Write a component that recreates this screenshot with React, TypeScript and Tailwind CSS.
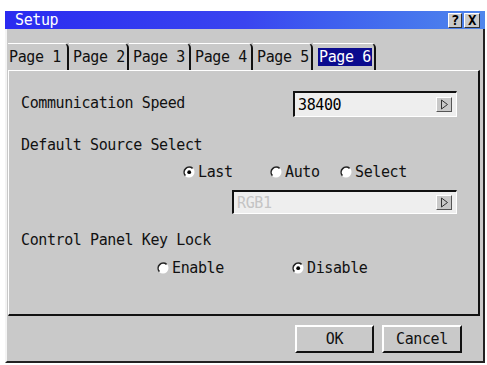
import React from 'react';

const font = "font-['DejaVu_Sans_Mono',monospace] text-[15px] tracking-[-0.4px] leading-[18px]";

const Radio: React.FC<{ checked?: boolean }> = ({ checked }) => (
  <svg width="12" height="12" viewBox="0 0 12 12" className="shrink-0">
    <circle cx="6" cy="6" r="5.5" fill="#fff" />
    <path d="M9.6 2.4 A5.1 5.1 0 0 0 2.4 9.6" stroke="#222" strokeWidth="1.6" fill="none" />
    {checked && <circle cx="6.2" cy="6.2" r="1.9" fill="#000" />}
  </svg>
);

const RadioItem: React.FC<{ label: string; checked?: boolean; width: string }> = ({ label, checked, width }) => (
  <div className={`flex items-center gap-[3px] ${width}`}>
    <Radio checked={checked} />
    <span>{label}</span>
  </div>
);

const Arrow = () => (
  <div className="w-[16px] h-[15px] bg-[#c9c9c9] border-t border-l border-t-white border-l-white border-b border-r border-b-[#555] border-r-[#555] flex items-center justify-center">
    <svg width="9" height="11" viewBox="0 0 9 11">
      <path d="M1.5 1 L7.5 5.5 L1.5 10 Z" fill="none" stroke="#333" strokeWidth="1" />
    </svg>
  </div>
);

const Select: React.FC<{ value: string; disabled?: boolean; width: string; height: string }> = ({ value, disabled, width, height }) => (
  <div
    className={`flex items-center justify-between pl-[3px] pr-[4px] bg-[#eeeeee] border-t-2 border-l-2 border-t-[#111] border-l-[#111] border-b border-r border-b-white border-r-white ${width} ${height}`}
  >
    <span className={disabled ? 'text-[#c4c4c4]' : 'text-black'}>{value}</span>
    <Arrow />
  </div>
);

const tabs = [
  { label: 'Page 1', w: 'w-[61px]', pl: 'pl-[1px]' },
  { label: 'Page 2', w: 'w-[60px]', pl: 'pl-[4px]' },
  { label: 'Page 3', w: 'w-[62px]', pl: 'pl-[4px]' },
  { label: 'Page 4', w: 'w-[62px]', pl: 'pl-[4px]' },
  { label: 'Page 5', w: 'w-[60px]', pl: 'pl-[4px]' },
  { label: 'Page 6', w: 'w-[63px]', pl: 'pl-[5px]', active: true },
];

export default function App() {
  return (
    <div className={`w-[487px] h-[365px] bg-white pt-[11px] pl-[5px] ${font}`}>
      <div className="w-[480px] h-[352px] flex flex-col bg-[#c9c9c9]">
        {/* title bar */}
        <div className="h-[18px] flex items-center justify-between pl-[10px] pr-[5px] bg-gradient-to-r from-[#2a2af0] via-[#3a44f0] to-[#4f86ec] text-white">
          <span>Setup</span>
          <div className="flex gap-[2px]">
            <div className="w-[14px] h-[15px] bg-[#c9c9c9] border-t border-l border-t-white border-l-white border-b border-r border-b-[#333] border-r-[#333] flex items-center justify-center text-black font-bold text-[14px] leading-none">
              ?
            </div>
            <div className="w-[16px] h-[15px] bg-[#c9c9c9] border-t border-l border-t-white border-l-white border-b border-r border-b-[#333] border-r-[#333] flex items-center justify-center text-black font-bold text-[14px] leading-none">
              X
            </div>
          </div>
        </div>

        {/* body */}
        <div className="flex-1 flex flex-col border-l-2 border-l-[#f4f4f4] border-r-2 border-r-[#222] border-b-2 border-b-[#222] pl-[1px] pr-[3px] pt-[14px] text-[#111]">
          {/* tabs */}
          <div className="flex h-[27px]">
            {tabs.map(t => (
              <div
                key={t.label}
                className={`h-full flex items-center ${t.w} ${t.pl} border-t border-t-white border-r-2 border-r-[#111] rounded-tr-[5px]`}
              >
                <span className={t.active ? 'bg-[#0b0b8e] text-white px-[1px]' : ''}>{t.label}</span>
              </div>
            ))}
          </div>

          {/* panel */}
          <div className="h-[246px] flex flex-col border-t border-l border-t-white border-l-white border-r-2 border-r-[#111] border-b-2 border-b-[#111] pl-[12px] pr-[21px]">
            <div className="mt-[20px] h-[26px] flex items-center justify-between">
              <span className="-mt-[3px]">Communication Speed</span>
              <Select value="38400" width="w-[164px]" height="h-[26px]" />
            </div>

            <div className="mt-[19px]">Default Source Select</div>

            <div className="mt-[9px] flex items-center pl-[162px]">
              <RadioItem label="Last" checked width="w-[87px]" />
              <RadioItem label="Auto" width="w-[70px]" />
              <RadioItem label="Select" width="w-[70px]" />
            </div>

            <div className="mt-[9px] flex justify-end">
              <Select value="RGB1" disabled width="w-[225px]" height="h-[24px]" />
            </div>

            <div className="mt-[17px]">Control Panel Key Lock</div>

            <div className="mt-[10px] flex items-center pl-[136px]">
              <RadioItem label="Enable" width="w-[135px]" />
              <RadioItem label="Disable" checked width="w-[90px]" />
            </div>
          </div>

          {/* buttons */}
          <div className="mt-[9px] flex justify-end gap-[8px] pr-[18px]">
            <button className="w-[79px] h-[28px] bg-[#c9c9c9] border-t-2 border-l-2 border-t-white border-l-white border-b-2 border-r-2 border-b-[#111] border-r-[#111] flex items-center justify-center">
              OK
            </button>
            <button className="w-[80px] h-[28px] bg-[#c9c9c9] border-t-2 border-l-2 border-t-white border-l-white border-b-2 border-r-2 border-b-[#111] border-r-[#111] flex items-center justify-center">
              Cancel
            </button>
          </div>
        </div>
      </div>
    </div>
  );
}
